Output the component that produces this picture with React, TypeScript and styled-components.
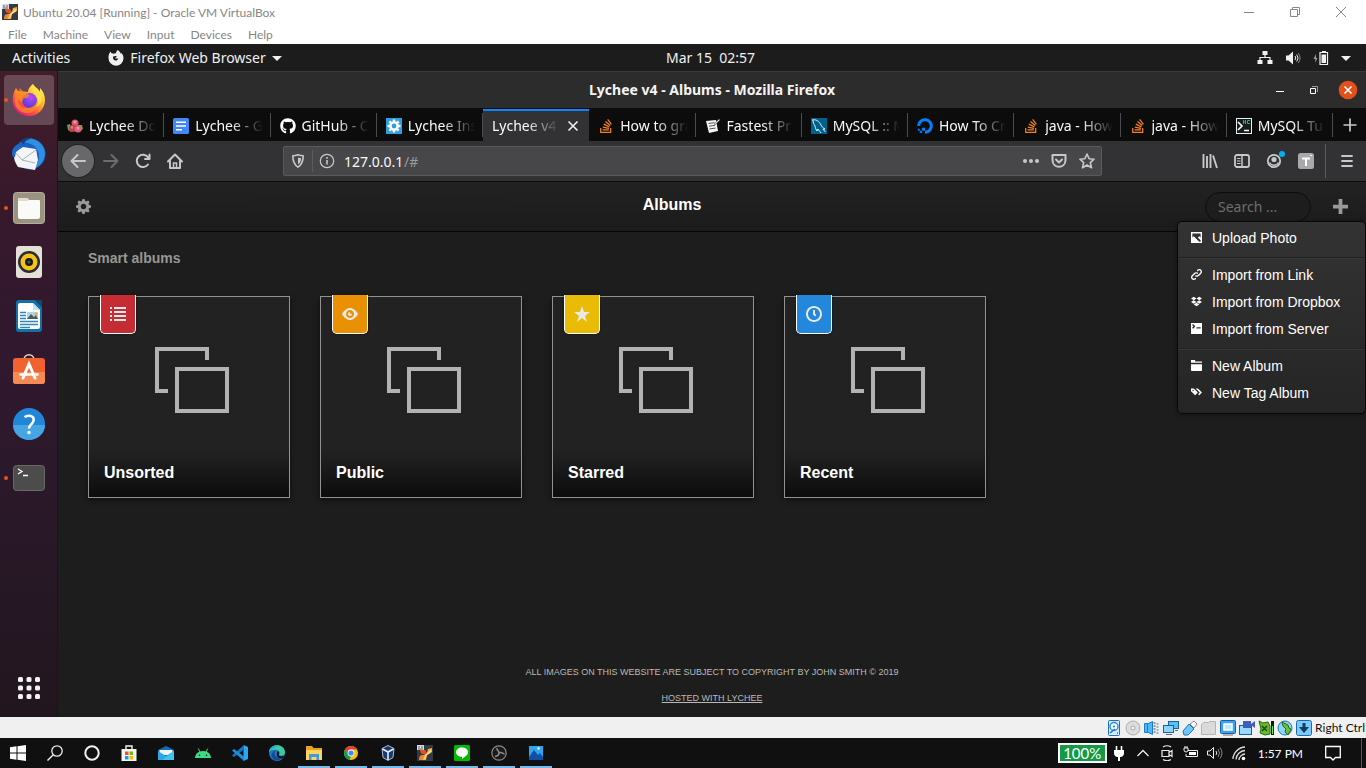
import React from "react";
import styled, { createGlobalStyle, css } from "styled-components";
import { FaDigitalOcean, FaDropbox, FaGithub, FaStackOverflow } from "react-icons/fa";

const ubuntu = `"Noto Sans", "Open Sans", sans-serif`;
const segoe = `Lato, "Open Sans", sans-serif`;
const helvetica = `"Liberation Sans", Arial, sans-serif`;

const GlobalStyle = createGlobalStyle`
  *, *::before, *::after { box-sizing: border-box; }
  body { margin: 0; background: #1d1d1d; font-family: ${ubuntu}; }
  button { margin: 0; padding: 0; border: 0; background: none; color: inherit; font: inherit; white-space: nowrap; }
  svg { display: block; flex: none; }
  h1, h2, p, ul { margin: 0; padding: 0; list-style: none; }
`;

const center = css`
  display: flex;
  align-items: center;
  justify-content: center;
`;

const Desktop = styled.div`
  display: flex;
  flex-direction: column;
  min-height: 100vh;
`;

/* Host window chrome */
const HostTitle = styled.div`
  display: flex;
  align-items: center;
  height: 24px;
  padding: 0 2px;
  gap: 5px;
  background: #fff;
  color: #868686;
  font: 12px ${segoe};
`;
const HostControls = styled.div`
  display: flex;
  margin-left: auto;
  button { ${center} width: 46px; height: 22px; }
`;
const HostMenu = styled.nav`
  display: flex;
  gap: 16px;
  height: 20px;
  padding: 0 8px;
  background: #fff;
  color: #868686;
  font: 12px ${segoe};
`;

/* Guest desktop */
const TopBar = styled.header`
  display: grid;
  grid-template-columns: 1fr auto 1fr;
  align-items: center;
  height: 27px;
  padding: 0 15px 0 12px;
  background: #1c1c1c;
  color: #f0f0f0;
  font-size: 14px;
`;
const TopClock = styled.time`
  padding-left: 58px;
`;
const TopGroup = styled.div<{ $end?: boolean }>`
  display: flex;
  align-items: center;
  gap: ${(p) => (p.$end ? 12 : 38)}px;
  justify-content: ${(p) => (p.$end ? "flex-end" : "flex-start")};
  button { display: flex; align-items: center; gap: 6px; }
`;
const Guest = styled.div`
  display: flex;
  flex: 1;
`;
const Dock = styled.aside`
  display: flex;
  flex-direction: column;
  align-items: center;
  width: 58px;
  padding: 4px 0;
  gap: 4px;
  border-right: 1px solid #181418;
  background: linear-gradient(#421d2a 0%, #38192b 18%, #30182f 45%, #281827 75%, #22161e 100%);
`;
const DockButton = styled.button<{ $running?: boolean; $active?: boolean; $last?: boolean }>`
  ${center}
  position: relative;
  width: 50px;
  height: 50px;
  border-radius: 4px;
  background: ${(p) => (p.$active ? "rgba(255,255,255,0.2)" : "none")};
  margin-top: ${(p) => (p.$last ? "auto" : "0")};
  &::before {
    content: "";
    display: ${(p) => (p.$running ? "block" : "none")};
    position: absolute;
    left: 0;
    top: 23px;
    width: 4px;
    height: 4px;
    border-radius: 50%;
    background: #e95420;
  }
`;

/* Firefox */
const Browser = styled.main`
  display: flex;
  flex-direction: column;
  flex: 1;
  min-width: 0;
  border-top: 1px solid #3a3a3a;
  background: #1d1d1d;
`;
const WindowBar = styled.div`
  display: grid;
  grid-template-columns: 1fr auto 1fr;
  align-items: center;
  height: 36px;
  padding-bottom: 1px;
  background: #2c2c2c;
  color: #f4f4f4;
  font-size: 14px;
  font-weight: 700;
`;
const WindowControls = styled.div`
  grid-column: 3;
  display: flex;
  justify-content: flex-end;
  gap: 14px;
  padding-right: 8px;
  button { ${center} width: 20px; height: 20px; }
`;
const TabStrip = styled.div`
  display: flex;
  height: 33px;
  padding-top: 1px;
  background: #0c0c0d;
  color: #f9f9fa;
  font-size: 14px;
`;
const Tab = styled.button<{ $active?: boolean }>`
  display: flex;
  flex: 1 1 0;
  min-width: 0;
  align-items: center;
  gap: 6px;
  position: relative;
  padding: 0 8px 1px 9px;
  background: ${(p) => (p.$active ? "#323234" : "none")};
  border-top: 2px solid ${(p) => (p.$active ? "#0a84ff" : "transparent")};
  &::after {
    content: "";
    display: ${(p) => (p.$active ? "none" : "block")};
    position: absolute;
    right: 0;
    top: 2px;
    width: 1px;
    height: 24px;
    background: #4c4c4e;
  }
`;
const TabLabel = styled.span`
  flex: 1;
  min-width: 0;
  overflow: hidden;
  text-align: left;
  white-space: nowrap;
  mask-image: linear-gradient(to left, transparent, #000 32px);
`;
const NewTab = styled.button`
  ${center}
  width: 33px;
`;
const NavBar = styled.div`
  display: flex;
  align-items: center;
  height: 41px;
  padding: 0 3px 0 4px;
  border-bottom: 1px solid #0c0c0d;
  background: #323234;
  color: #c8c8c9;
`;
const NavButton = styled.button<{ $back?: boolean; $dim?: boolean }>`
  ${center}
  width: 32px;
  height: 32px;
  margin-right: ${(p) => (p.$back ? 1 : 0)}px;
  border-radius: 50%;
  background: ${(p) => (p.$back ? "#68686a" : "none")};
  box-shadow: ${(p) => (p.$back ? "0 0 0 1px #222" : "none")};
  color: ${(p) => (p.$dim ? "#6d6d6f" : "inherit")};
`;
const UrlBar = styled.div`
  display: flex;
  flex: 1;
  align-items: center;
  gap: 6px;
  height: 30px;
  margin: 0 92px;
  padding: 0 6px;
  border: 1px solid #5a5a5c;
  border-radius: 2px;
  background: #474749;
  font-size: 14px;
`;
const UrlText = styled.label`
  display: flex;
  flex: 1;
  color: #9a9a9c;
  padding-left: 3px;
  input {
    width: 60px;
    padding: 0;
    border: 0;
    background: none;
    color: #f9f9fa;
    font: inherit;
    field-sizing: content;
  }
`;
const UrlActions = styled.div`
  display: flex;
  gap: 12px;
`;
const Divider = styled.i<{ $h: number }>`
  width: 1px;
  height: ${(p) => p.$h}px;
  background: #5b5b60;
`;
const MenuDivider = styled(Divider)`
  margin: 0 5px 0 3px;
`;

/* Lychee */
const Header = styled.header`
  position: relative;
  display: flex;
  align-items: center;
  height: 50px;
  border-bottom: 1px solid #060606;
  background: linear-gradient(#222, #1b1b1b);
  color: #9a9a9a;
`;
const Settings = styled.button`
  width: 81px;
  padding-left: 18px;
`;
const PageTitle = styled.h1`
  flex: 1;
  padding-bottom: 4px;
  color: #fff;
  font: 700 16px/20px ${helvetica};
  text-align: center;
`;
const Search = styled.input`
  width: 106px;
  height: 30px;
  padding: 0 12px;
  border: 1px solid #0c0c0c;
  border-radius: 15px;
  background: #1d1d1d;
  color: #fff;
  font: 14px ${ubuntu};
  &::placeholder { color: #6e6e6e; opacity: 1; }
`;
const AddButton = styled.button`
  padding: 0 18px 0 22px;
`;
const Menu = styled.div`
  position: absolute;
  right: 0;
  top: 39px;
  z-index: 2;
  width: 189px;
  padding: 2px 0 7px;
  border: 1px solid #080808;
  border-radius: 5px;
  background: linear-gradient(#333, #252525);
  box-shadow: 0 1px 4px rgba(0, 0, 0, 0.4);
  color: #fff;
  hr { margin: 6px 0 3px; height: 1px; border: 0; background: #222; box-shadow: 0 1px 0 #373737; }
`;
const MenuItem = styled.button`
  display: flex;
  align-items: center;
  gap: 10px;
  width: 100%;
  height: 27px;
  padding: 0 13px;
  font: 14px ${helvetica};
`;
const Content = styled.section`
  flex: 1;
  padding: 17px 30px;
`;
const SectionTitle = styled.h2`
  color: #979797;
  font: 700 14px/18px ${helvetica};
`;
const Albums = styled.div`
  display: flex;
  flex-wrap: wrap;
  gap: 30px;
  margin-top: 29px;
`;
const Album = styled.button`
  display: flex;
  flex-direction: column;
  align-items: center;
  position: relative;
  width: 202px;
  height: 202px;
  padding-top: 50px;
  border: 1px solid #929292;
  background: #222;
  box-shadow: 0 2px 5px rgba(0, 0, 0, 0.5);
`;
const AlbumArt = styled.svg`
  margin-left: 6px;
  fill: none;
  stroke: #b3b3b3;
  stroke-width: 4;
`;
const Badge = styled.span<{ $color: string }>`
  ${center}
  position: absolute;
  left: 11px;
  top: -2px;
  width: 36px;
  height: 39px;
  border: 1px solid #fff;
  border-top: 0;
  border-radius: 0 0 5px 5px;
  background: ${(p) => p.$color};
  box-shadow: 0 0 2px rgba(0, 0, 0, 0.6);
  color: #e9e9e9;
`;
const AlbumTitle = styled.span`
  width: 100%;
  margin-top: auto;
  padding: 12px 15px 14px;
  background: linear-gradient(rgba(0, 0, 0, 0), rgba(0, 0, 0, 0.65));
  color: #fff;
  font: 700 16px/20px ${helvetica};
  text-align: left;
`;
const Footer = styled.footer`
  display: flex;
  flex-direction: column;
  align-items: center;
  gap: 14px;
  padding-bottom: 13px;
  color: #bababa;
  font: 9px/12px ${helvetica};
  text-transform: uppercase;
  a { color: inherit; }
`;

/* Host bottom bars */
const StatusBar = styled.div`
  display: flex;
  align-items: center;
  justify-content: flex-end;
  gap: 3px;
  height: 21px;
  padding-right: 1px;
  background: #f0f0f0;
  color: #111;
  font: 12px ${segoe};
`;
const Taskbar = styled.footer`
  display: flex;
  height: 30px;
  background: #101010;
  color: #fff;
`;
const TaskButton = styled.button<{ $open?: boolean }>`
  ${center}
  width: 37px;
  padding: 2px 2px 0 0;
  border-bottom: 2px solid ${(p) => (p.$open ? "#76b9ed" : "transparent")};
  border-image: ${(p) => (p.$open ? "linear-gradient(90deg, transparent 4px, #76b9ed 4px, #76b9ed 32px, transparent 32px) 2" : "none")};
`;
const Tray = styled.div`
  display: flex;
  align-items: center;
  gap: 4px;
  margin-left: auto;
  font: 12px ${segoe};
`;
const TrayIcons = styled.div`
  display: flex;
  gap: 8px;
`;
const Charge = styled.span`
  ${center}
  width: 49px;
  height: 20px;
  border: 2px solid #fff;
  background: #159947;
  font: 15px ${segoe};
`;
const Clock = styled.time`
  padding: 0 18px 0 7px;
`;
const ShowDesktop = styled.button`
  width: 5px;
  height: 30px;
  margin-left: 16px;
  border-left: 1px solid #555;
`;

/* Icons */
type IconProps = { size: number; children: React.ReactNode; box?: string };
const Icon = ({ size, children, box = "0 0 16 16" }: IconProps) => (
  <svg width={size} height={size} viewBox={box} fill="none" aria-hidden="true">{children}</svg>
);
const Glyph = ({ d, size, y = 0 }: { d: string; size: number; y?: number }) => (
  <svg width={size} height={size} viewBox={`0 ${-y} 8 8`} fill="currentColor" fillRule="evenodd" aria-hidden="true"><path d={d} /></svg>
);

const glyphs = {
  image: "M0 0v8h8v-8h-8zm1 1h6v3l-1-1-1 1 2 2v1h-1l-4-4-1 1v-3z",
  link: "M5.88.03c-.18.01-.36.03-.53.09-.27.1-.53.25-.75.47a.5.5 0 1 0 .69.69c.11-.11.24-.17.38-.22.35-.12.78-.07 1.06.22.39.39.39 1.04 0 1.44l-1.5 1.5c-.44.44-.8.48-1.06.47-.26-.01-.41-.13-.41-.13a.5.5 0 1 0-.5.88s.34.22.84.25c.5.03 1.2-.16 1.81-.78l1.5-1.5c.78-.78.78-2.04 0-2.81-.28-.28-.61-.45-.97-.53-.18-.04-.38-.04-.56-.03zm-2 2.31c-.5-.02-1.19.15-1.78.75l-1.5 1.5c-.78.78-.78 2.04 0 2.81.56.56 1.36.72 2.06.47.27-.1.53-.25.75-.47a.5.5 0 1 0-.69-.69c-.11.11-.24.17-.38.22-.35.12-.78.07-1.06-.22-.39-.39-.39-1.04 0-1.44l1.5-1.5c.4-.4.75-.45 1.03-.44.28.01.47.09.47.09a.5.5 0 1 0 .44-.88s-.34-.2-.84-.22z",
  terminal: "M0 0v8h8v-8h-8zm1.5.78l1.72 1.72-1.72 1.72-.72-.72 1-1-1-1 .72-.72zm2.5 2.22h3v1h-3v-1z",
  folder: "M0 0v2h8v-1h-5v-1h-3zm0 3v4.5c0 .28.22.5.5.5h7c.28 0 .5-.22.5-.5v-4.5h-8z",
  tags: "M0 0v2l3 3 1.5-1.5.5-.5-2-2-1-1h-2zm3.41 0l3 3-1.19 1.22.78.78 2-2-3-3h-1.59zm-1.91 1c.28 0 .5.22.5.5s-.22.5-.5.5-.5-.22-.5-.5.22-.5.5-.5z",
  cog: "M3.5 0l-.5 1.19c-.1.03-.19.08-.28.13l-1.19-.5-.72.72.5 1.19c-.05.1-.09.18-.13.28l-1.19.5v1l1.19.5c.04.1.08.18.13.28l-.5 1.19.72.72 1.19-.5c.09.04.18.09.28.13l.5 1.19h1l.5-1.19c.09-.04.19-.08.28-.13l1.19.5.72-.72-.5-1.19c.04-.09.09-.19.13-.28l1.19-.5v-1l-1.19-.5c-.03-.09-.08-.19-.13-.28l.5-1.19-.72-.72-1.19.5c-.09-.04-.19-.09-.28-.13l-.5-1.19h-1zm.5 2.5c.83 0 1.5.67 1.5 1.5s-.67 1.5-1.5 1.5-1.5-.67-1.5-1.5.67-1.5 1.5-1.5z",
  plus: "M3 0v3h-3v2h3v3h2v-3h3v-2h-3v-3z",
  list: "M0 0v1h1v-1h-1zm2 0v1h6v-1h-6zm-2 2v1h1v-1h-1zm2 0v1h6v-1h-6zm-2 2v1h1v-1h-1zm2 0v1h6v-1h-6zm-2 2v1h1v-1h-1zm2 0v1h6v-1h-6z",
  eye: "M4.03 0c-2.53 0-4.03 3-4.03 3s1.5 3 4.03 3c2.47 0 3.97-3 3.97-3s-1.5-3-3.97-3zm-.03 1c1.11 0 2 .9 2 2 0 1.11-.89 2-2 2-1.1 0-2-.89-2-2 0-1.1.9-2 2-2zm0 1c-.55 0-1 .45-1 1s.45 1 1 1 1-.45 1-1c0-.1-.04-.19-.06-.28-.08.16-.24.28-.44.28-.28 0-.5-.22-.5-.5 0-.2.12-.36.28-.44-.09-.03-.18-.06-.28-.06z",
  star: "M4 0l-1 3h-3l2.5 2-1 3 2.5-2 2.5 2-1-3 2.5-2h-3l-1-3z",
  clock: "M4 0c-2.2 0-4 1.8-4 4s1.8 4 4 4 4-1.8 4-4-1.8-4-4-4zm0 1c1.66 0 3 1.34 3 3s-1.34 3-3 3-3-1.34-3-3 1.34-3 3-3zm-.5 1v2.22l.16.13.5.5.34.38.72-.72-.38-.34-.34-.34v-1.81h-1z",
};

const Caret = () => <Icon size={10} box="0 0 10 10"><path d="M0 3h10L5 8z" fill="#f0f0f0" /></Icon>;

const machineArt = (
  <>
    <path d="M0 0h16v16H0z" fill="#343a45" />
    <path d="M2 15l1-4 4-1 3-2 1-4 4-1v4l-3 2-2 1-1 5z" fill="#f9b233" />
    <path d="M3 5h5l2 3-2 1.500-4-1z" fill="#e8501c" />
    <path d="M2 15l1-4 3-1 1 2-2 3z" fill="#f08030" />
    <path d="M9 9l5-4v2l-4 3-2 4H7z" fill="#fde0ac" />
    <path d="M0 0h7v5H0z" fill="#d8dce0" />
    <path d="M1 2h2M4 2h2M1 4h5" stroke="#666" />
  </>
);

const FirefoxMono = () => (
  <Icon size={16}>
    <path d="M10 0C8.500 1 8 2 8.200 3.200 7 3 6 3.200 5.400 3.800L3.200 3 2.600 1.500C1 3.200.4 5.600.5 8a7.500 7.500 0 0 0 15 .4C15.600 5.600 14.500 4 13 2.800l.3 1.800C12.800 2.500 11 1.500 10 0zM5.200 6.500l2.300-.4c.8-.2 1.200.2 1.200.8-.9.2-1.600.8-1.400 1.500 1 .6 2-.3 3 .1-.5 1.600-2 2.300-3.300 1.900C5.400 10 4.600 8.200 5.200 6.500z" fill="#f0f0f0" fillRule="evenodd" />
  </Icon>
);

const FirefoxLogo = () => (
  <Icon size={34} box="0 0 34 34">
    <defs>
      <linearGradient id="ffBody" x1="0.85" y1="0.1" x2="0.2" y2="0.95">
        <stop offset="0" stopColor="#fff44f" /><stop offset=".4" stopColor="#ffab2a" /><stop offset=".7" stopColor="#ff4f45" /><stop offset="1" stopColor="#e31587" />
      </linearGradient>
      <radialGradient id="ffCore" cx=".6" cy=".3" r=".8"><stop offset="0" stopColor="#b44bff" /><stop offset="1" stopColor="#4f36c9" /></radialGradient>
    </defs>
    <path d="M21 1c-3 2-5 5-5 8L6 8 4 5C1 10 0 15 1 20c1.500 8 8 13 16 13 9 0 16-7 16-16 0-5-2-9-5-12v4c-2-4-6-5-7-8z" fill="url(#ffBody)" />
    <circle cx="17.500" cy="17.500" r="7.500" fill="url(#ffCore)" />
    <path d="M4 6c1 1 2 2 3 2l4 .500C9 6 8 5 7 6l1 2c3 0 6 1 9 4 1 1-1 3-3 3s-4 1-3 3c-2 1-4 0-5-2 0 6 4 9 9 9 7 0 11-5 10-11 4 9-2 16-10 16C8 30 1 24 3 14z" fill="#ff8a20" opacity=".75" />
    <path d="M21 1c-2 3-2 6 1 9 4 4 5 9 2 14 7-3 7-11 4-15-2-4-6-5-7-8z" fill="#ffe147" />
  </Icon>
);

const Thunderbird = () => (
  <Icon size={36} box="0 0 36 36">
    <circle cx="19" cy="18" r="15.500" fill="#1b5fc0" />
    <path d="M9 7C12 2 18 1 22 3c7 2 12 8 12 15-1 8-6 13-12 15 6-6 8-13 4-20C22 7 15 6 9 7z" fill="#2f8fe0" />
    <path d="M9 6c3-4 8-5 12-3-4 0-7 2-8 5z" fill="#173f85" />
    <path d="M4 16l8-5 13 2 2 11-3 10-17-3C3 25 2 20 4 16z" fill="#f4f5f7" />
    <path d="M5 17l6 7 14-10M11 24l13 3" stroke="#aab2bd" />
    <path d="M1 17c0-4 2-7 6-9l4 3-6 5-1 5C2 22 1 20 1 17z" fill="#1d68cb" />
  </Icon>
);

const dockItems = [
  { name: "Firefox", running: true, active: true, icon: <FirefoxLogo /> },
  { name: "Thunderbird", icon: <Thunderbird /> },
  {
    name: "Files", running: true,
    icon: (
      <Icon size={32} box="0 0 32 32">
        <rect x=".500" y=".500" width="31" height="31" rx="3" fill="#9a9382" stroke="#b5ae9d" />
        <path d="M5 7q0-1 1-1h8l2 2h10q1 0 1 1v16q0 2-2 2H7q-2 0-2-2z" fill="#fafaf8" />
        <path d="M5 7q0-1 1-1h8l2 2-2 1H5z" fill="#dedbd2" />
      </Icon>
    ),
  },
  {
    name: "Rhythmbox",
    icon: (
      <Icon size={32} box="0 0 32 32">
        <rect x="3" width="26" height="32" rx="3" fill="#e4e0d8" />
        <circle cx="16" cy="16" r="11" fill="#2a2c30" /><circle cx="16" cy="16" r="8.500" fill="#f3c318" />
        <circle cx="16" cy="16" r="4" fill="#17191c" /><circle cx="16" cy="16" r="1.500" fill="#555" />
      </Icon>
    ),
  },
  {
    name: "LibreOffice Writer",
    icon: (
      <Icon size={32} box="0 0 32 32">
        <path d="M6 0h16l7 7v22q0 3-3 3H6q-3 0-3-3V3q0-3 3-3z" fill="#1272a8" />
        <path d="M7 3h13l7 7v17q0 2-2 2H7q-2 0-2-2V5q0-2 2-2z" fill="#fff" />
        <path d="M22 0h7v7z" fill="#0c4a70" /><path d="M20 3v7h7z" fill="#bfe2f4" />
        <path d="M7 12.500h6M7 15.500h6M7 18.500h6M7 21.500h18M7 24.500h18M7 27.500h10" stroke="#2e86b7" strokeWidth="1.500" />
        <path d="M14 12h11v7H14z" fill="#a6d8ef" /><path d="M14 19l4-5 3 3 2-2 2 4z" fill="#4c5b63" /><circle cx="23" cy="14" r="1.500" fill="#f6b21a" />
      </Icon>
    ),
  },
  {
    name: "Software",
    icon: (
      <Icon size={32} box="0 0 32 32">
        <path d="M11 6c0-7 10-7 10 0" stroke="#f5d9b0" strokeWidth="1.500" />
        <rect y="4" width="32" height="26" rx="3" fill="#f0622f" /><path d="M0 18h32v9q0 3-3 3H3q-3 0-3-3z" fill="#f68a53" />
        <path d="M10 24l6-14 6 14" stroke="#fff" strokeWidth="3" strokeLinecap="round" />
        <path d="M7.500 20.500h17" stroke="#fff" strokeWidth="2.500" strokeLinecap="round" />
      </Icon>
    ),
  },
  {
    name: "Help",
    icon: (
      <Icon size={32} box="0 0 32 32">
        <circle cx="16" cy="16" r="16" fill="#2086d8" /><path d="M0 17a16 15 0 0 0 32 0z" fill="#47a5e5" />
        <path d="M11.500 9c6-3 11 0 8.500 5C18.500 17 16 17 16 20.500" stroke="#fff" strokeWidth="2.500" /><circle cx="16" cy="24.500" r="1.800" fill="#fff" />
      </Icon>
    ),
  },
  {
    name: "Terminal", running: true,
    icon: (
      <Icon size={32} box="0 0 32 32">
        <rect x=".500" y="3.500" width="31" height="25" rx="3" fill="#4c4c4c" stroke="#686868" />
        <path d="M5 7l4 2.500L5 12M10 13.500h5" stroke="#fff" strokeWidth="1.300" />
      </Icon>
    ),
  },
];

const StackIcon = () => <FaStackOverflow size={16} color="#f48024" />;

const tabs: { label: string; icon?: React.ReactNode }[] = [
  {
    label: "Lychee Do",
    icon: (
      <Icon size={16}>
        <path d="M0 7l3-1 2 5-1 3-3-2zM11 7h4l1 4-4 3z" fill="#6fa044" />
        <circle cx="8" cy="5" r="3.500" fill="#d8526a" /><circle cx="5.500" cy="10.500" r="3.500" fill="#c53d58" /><circle cx="11" cy="11" r="3.500" fill="#de6078" />
        <circle cx="8" cy="4" r="1.500" fill="#f19aa7" /><circle cx="11" cy="10" r="1.500" fill="#f19aa7" /><circle cx="5" cy="9.500" r="1.200" fill="#e8808f" />
      </Icon>
    ),
  },
  {
    label: "Lychee - G",
    icon: <Icon size={16}><rect width="16" height="16" rx="1.500" fill="#4285f4" /><path d="M3 4.200h10M3 8h10M3 11.800h6" stroke="#fff" strokeWidth="1.600" /></Icon>,
  },
  { label: "GitHub - C", icon: <FaGithub size={16} color="#fff" /> },
  {
    label: "Lychee Ins",
    icon: (
      <Icon size={16}>
        <rect width="16" height="16" fill="#2c9fe0" />
        <g stroke="#fff" strokeWidth="2.500"><path d="M8 1.500v13M1.500 8h13M3.400 3.400l9.200 9.200M12.600 3.400l-9.200 9.200" /></g>
        <circle cx="8" cy="8" r="3.600" fill="#2c9fe0" stroke="#fff" strokeWidth="2.400" />
      </Icon>
    ),
  },
  { label: "Lychee v4" },
  { label: "How to gra", icon: <StackIcon /> },
  {
    label: "Fastest Pr",
    icon: (
      <Icon size={16}>
        <path d="M1 3l10-1 2 11-9 2z" fill="#f4f4f4" /><path d="M3.500 5.500l6-.800M4 8.200l6-.800M4.500 10.900l6-.800" stroke="#555" />
        <path d="M9 6l5-5 1 1-5 5z" fill="#ddd" stroke="#444" strokeWidth=".500" />
      </Icon>
    ),
  },
  {
    label: "MySQL :: M",
    icon: (
      <Icon size={16}>
        <rect width="16" height="16" fill="#00618a" />
        <path d="M1 2c4-1 7 1 9 5 1 2 2 3 4 4l-2 .300 2.500 2.700M2 2c0 3 1 4 2 6 .500 2 1 4 2 5l1-2c1 2 2 2 3 4" stroke="#fff" strokeWidth=".900" />
      </Icon>
    ),
  },
  { label: "How To Cr", icon: <FaDigitalOcean size={16} color="#0080ff" /> },
  { label: "java - How", icon: <StackIcon /> },
  { label: "java - How", icon: <StackIcon /> },
  {
    label: "MySQL Tu",
    icon: (
      <Icon size={16}>
        <rect x=".500" y=".500" width="15" height="15" fill="#151c20" stroke="#eee" />
        <path d="M2 4l4 4-4 4M8 12.500h5" stroke="#fff" strokeWidth="1.600" />
        <path d="M7.500 2v4M9.500 2v4M7.500 4h2M14 2.500h-2.500v3H14" stroke="#2bb24c" />
      </Icon>
    ),
  },
];

const s = { stroke: "currentColor", strokeWidth: 2, strokeLinecap: "round" as const, strokeLinejoin: "round" as const };

const albums = [
  { title: "Unsorted", color: "#c62c33", d: glyphs.list, y: 0.5 },
  { title: "Public", color: "#e99004", d: glyphs.eye, y: 1 },
  { title: "Starred", color: "#e9bb06", d: glyphs.star, y: 0 },
  { title: "Recent", color: "#2387dc", d: glyphs.clock, y: 0 },
];

const statusIcons = [
  { name: "Hard disks", art: <><rect x="2.500" y=".500" width="11" height="15" rx="1" fill="#d4ecff" stroke="#1b6fc4" /><circle cx="8" cy="6.500" r="4" fill="#fff" stroke="#2b8ee0" strokeWidth="1.500" /><circle cx="8" cy="6.500" r="1" fill="#1b6fc4" /><path d="M4 13l5-4M11 13h1" stroke="#1b6fc4" strokeWidth="1.500" /></> },
  { name: "Optical drives", art: <><circle cx="8" cy="8" r="7" fill="#dcdcdc" stroke="#b0b0b0" /><circle cx="8" cy="8" r="2" fill="#f4f4f4" stroke="#aaa" /></> },
  { name: "Audio", art: <><path d="M.500 3.500h3v9h-3zM3.500 4l5-2.500v13l-5-2.500z" fill="#4fb8f5" stroke="#1e78c8" /><path d="M10.500 2v12" stroke="#8a9aa8" strokeWidth="2" strokeDasharray="2 1" /><path d="M13.500 3v11" stroke="#9fb0bd" strokeWidth="2" strokeDasharray="2 1" /></> },
  { name: "Network", art: <><rect x="5.500" y="1.500" width="10" height="7" fill="#5cc0f8" stroke="#1860a8" /><rect x=".500" y="5.500" width="10" height="7" fill="#8bd6ff" stroke="#1860a8" /><path d="M3 14.500h6M12 10.500h3" stroke="#666" /></> },
  { name: "USB", art: <><path d="M1 11l6-7 5 5-6 6H2z" fill="#6ec6fa" stroke="#1a72c2" /><path d="M8 4l4-3 3 3-3 4z" fill="#fff" stroke="#889" /></> },
  { name: "Shared folders", art: <path d="M.500 4.500l2-2h5l1-1h6v13H.500z" fill="#dadada" stroke="#b5b5b5" /> },
  { name: "Display", art: <><rect x=".500" y=".500" width="15" height="13" rx="1" fill="#3da3ee" stroke="#1560a8" /><path d="M4 4h8v6H4z" fill="#bfe7ff" stroke="#fff" strokeWidth="1.500" /><path d="M3 15h10" stroke="#777" /></> },
  { name: "Recording", art: <><rect x=".500" y="5.500" width="12" height="9" fill="#9ad9ff" stroke="#1560a8" /><path d="M4 1h8v7H4zM12 4l4-3v7l-4-3z" fill="#3f5fc0" /></> },
  { name: "Features", art: <><path d="M1 1l4 2 5-1 2 4v8l-5 1-5-2 1-4z" fill="#67b82c" stroke="#286a10" /><path d="M4 6l5 5M9 6l-5 5" stroke="#174d08" strokeWidth="1.500" /><path d="M13 1h3v14h-3z" fill="#111" /><path d="M14 6h1v8h-1z" fill="#4f4" /></> },
  { name: "Mouse", art: <><circle cx="8" cy="8" r="7" fill="#8dd5fb" stroke="#1c78c0" /><path d="M5 2l6 3 1 3 2 1-3 6-3-3 1-3-3-3z" fill="#6cc03a" stroke="#276b14" /></> },
  { name: "Keyboard", art: <><rect x=".500" y=".500" width="15" height="15" rx="2" fill="#7acbf8" stroke="#1a6ab0" /><path d="M6.500 3h3v4H13l-5 6-5-6h3.500z" fill="#123c66" /></> },
];

const tasks = [
  { name: "Start", art: <path d="M0 2.200l6.500-.900v6.200H0zM7.500 1.200L16 0v7.500H7.500zM0 8.500h6.500v6.200L0 13.800zM7.500 8.500H16V16l-8.500-1.200z" fill="#fff" /> },
  { name: "Search", art: <><circle cx="10" cy="6" r="5.200" stroke="#eee" strokeWidth="1.300" /><path d="M6.300 9.700L.500 15.500" stroke="#eee" strokeWidth="1.400" /></> },
  { name: "Cortana", art: <circle cx="8" cy="8" r="6.700" stroke="#f0f0f0" strokeWidth="2" /> },
  { name: "Microsoft Store", art: <><path d="M5 4V1h6v3" stroke="#f4f4f4" strokeWidth="1.400" /><path d="M.500 4h15v12H.500z" fill="#f4f4f4" /><path d="M4 6.500h3.500V10H4z" fill="#f25022" /><path d="M8.500 6.500H12V10H8.500z" fill="#7fba00" /><path d="M4 11h3.500v3.500H4z" fill="#00a4ef" /><path d="M8.500 11H12v3.500H8.500z" fill="#ffb900" /></> },
  { name: "Mail", art: <><path d="M0 5l8-4 8 4v10H0z" fill="#0f6cbd" /><path d="M1.500 5h13v5h-13z" fill="#f4f4f4" /><path d="M0 6l8 5 8-5v9H0z" fill="#28a8ea" /><path d="M16 6v9H4z" fill="#3fc4f6" /></> },
  { name: "Android Studio", art: <><path d="M0 13c.300-4 3-7 8-7s7.700 3 8 7z" fill="#3ddc84" /><path d="M3.200 3.500L5 7M12.800 3.500L11 7" stroke="#3ddc84" /><circle cx="4.500" cy="10.200" r=".800" fill="#101010" /><circle cx="11.500" cy="10.200" r=".800" fill="#101010" /></> },
  { name: "Visual Studio Code", art: <><path d="M11.500 0L16 2v12l-4.500 2z" fill="#2aa8f2" /><path d="M12 0v4.500L2 12 0 10.500z" fill="#0f78c0" /><path d="M12 16v-4.500L2 4 0 5.500z" fill="#1b8fdc" /></> },
  { name: "Edge", art: <><circle cx="8" cy="8" r="8" fill="#1b74c8" /><path d="M0 7c1-9 15-9 16 0 .300 3-3 4.500-6 3 1-1 1-4-2-5-3-.500-6 0-8 2z" fill="#3ccb9b" /><path d="M0 7c1-5 5-7 9-6.500C5 2 3 4 0 7z" fill="#28a6da" /><path d="M6.500 5.500C4 8 6 13 12 13.500c-2 2.500-6 2.500-8 0-2.500-3-1-7 2.500-8z" fill="#124a94" /><path d="M9 6c2 1.500 1 3 .500 4 1 1.500 4 1.800 6 .500l-2 3C9 14 6 10 9 6z" fill="#101010" /></> },
  { name: "File Explorer", open: true, art: <><path d="M0 1h6l1.500 2H16v12H0z" fill="#e8a317" /><path d="M0 5h16v10H0z" fill="#fcd462" /><path d="M3 15V9h10v6h-2.500v-3h-5v3z" fill="#3f9be0" /></> },
  { name: "Chrome", open: true, art: <><circle cx="8" cy="8" r="7" fill="#f4c20d" /><path d="M2 4.500a7 7 0 0 1 12.200 0H8L5 9.500z" fill="#db4437" /><path d="M2 4.500l3 5 3 2-1.500 3.400A7 7 0 0 1 2 4.500z" fill="#0f9d58" /><circle cx="8" cy="8" r="3.400" fill="#fff" /><circle cx="8" cy="8" r="2.600" fill="#4285f4" /></> },
  { name: "VirtualBox", open: true, art: <><path d="M8 .500l6 3-1 9L8 15.500l-5-3-1-9z" fill="#183a6b" stroke="#a9bede" /><path d="M2.500 4L8 7l5.500-3M8 7v8" stroke="#e7eef8" strokeWidth="1.600" /></> },
  { name: "Virtual machine", open: true, art: machineArt },
  { name: "LINE", open: true, art: <><rect width="16" height="16" rx="1.500" fill="#00b900" /><path d="M8 2.500c3.500 0 6 2 6 4.800S11 11.500 8 14v-2.200C4.500 11.800 2 10 2 7.300s2.500-4.800 6-4.800z" fill="#fff" /></> },
  { name: "OBS Studio", open: true, art: <><circle cx="8" cy="8" r="7.200" fill="#1a1a1a" stroke="#8a8a8a" strokeWidth="1.200" /><path d="M8 8c0-3-3-3-2-5M8 8c2.600-1.500 4.200 1 5.500 1M8 8c0 3-2 3-4 3.500" stroke="#8a8a8a" strokeWidth="1.500" /></> },
  { name: "Photos", open: true, art: <><path d="M1 1h14v14H1z" fill="#2fa4ef" /><path d="M1 12l5-7 4 5 2-2 3 4v3H1z" fill="#0f4fa8" /><circle cx="10.500" cy="3.500" r="1.200" fill="#fff" /></> },
];

export default function App() {
  return (
    <Desktop>
      <GlobalStyle />
      <HostTitle>
        <Icon size={16}>{machineArt}</Icon>
        Ubuntu 20.04 [Running] - Oracle VM VirtualBox
        <HostControls>
          <button aria-label="Minimize"><Icon size={10} box="0 0 10 10"><path d="M0 5.500h10" stroke="#888" /></Icon></button>
          <button aria-label="Restore"><Icon size={10} box="0 0 10 10"><path d="M.500 2.500h7v7h-7zM2.500 2.500v-2h7v7h-2" stroke="#888" /></Icon></button>
          <button aria-label="Close"><Icon size={10} box="0 0 10 10"><path d="M0 0l10 10M10 0L0 10" stroke="#888" /></Icon></button>
        </HostControls>
      </HostTitle>
      <HostMenu>
        {["File", "Machine", "View", "Input", "Devices", "Help"].map((m) => <button key={m}>{m}</button>)}
      </HostMenu>

      <TopBar>
        <TopGroup>
          <button>Activities</button>
          <button><FirefoxMono />Firefox Web Browser<Caret /></button>
        </TopGroup>
        <TopClock>Mar 15&nbsp; 02:57</TopClock>
        <TopGroup $end>
          <Icon size={16}><path d="M5.500 1h5v4h-5zM.500 10h5v4h-5zM10.500 10h5v4h-5z" fill="#f0f0f0" /><path d="M8 5v3M3 10V7.500h10V10" stroke="#f0f0f0" strokeWidth="1.200" /></Icon>
          <Icon size={16}><path d="M1 5.500h2.500L8 1.500v13l-4.500-4H1z" fill="#f0f0f0" /><path d="M10 6q1.500 2 0 4M11.700 4.500q2.800 3.500 0 7" stroke="#f0f0f0" /><path d="M13.300 3q3.500 5 0 10" stroke="#888" /></Icon>
          <Icon size={16}><path d="M3 4L.500 9H2.500L2 13l2.500-5H3z" fill="#9a9a9a" /><path d="M8 2.500h6.500v12H7v-12h1M9 1.500h4" stroke="#f0f0f0" strokeWidth="1.200" /><path d="M8.500 4.500h4.500V13H8.500z" fill="#f0f0f0" /></Icon>
          <Caret />
        </TopGroup>
      </TopBar>

      <Guest>
        <Dock>
          {dockItems.map((d) => (
            <DockButton key={d.name} aria-label={d.name} $running={d.running} $active={d.active}>{d.icon}</DockButton>
          ))}
          <DockButton aria-label="Show applications" $last>
            <Icon size={22} box="0 0 22 22">
              {[0, 1, 2].flatMap((r) => [0, 1, 2].map((c) => <rect key={`${r}${c}`} x={c * 8.5} y={r * 8.5} width="5" height="5" rx="1.500" fill="#f2f2f2" />))}
            </Icon>
          </DockButton>
        </Dock>

        <Browser>
          <WindowBar>
            <i />
            <span>Lychee v4 - Albums - Mozilla Firefox</span>
            <WindowControls>
              <button aria-label="Minimize"><Icon size={16}><path d="M4 9.500h8" stroke="#fff" /></Icon></button>
              <button aria-label="Restore"><Icon size={16}><path d="M4.500 6.500h5v5h-5z" stroke="#fff" /><path d="M6 4.500h5.500V10" stroke="#999" /></Icon></button>
              <button aria-label="Close"><Icon size={20} box="0 0 20 20"><circle cx="10" cy="10" r="9.300" fill="#e2501c" /><path d="M6.500 6.500l7 7M13.500 6.500l-7 7" stroke="#fff" strokeWidth="1.600" /></Icon></button>
            </WindowControls>
          </WindowBar>

          <TabStrip>
            {tabs.map((t, i) => (
              <Tab key={i} $active={!t.icon}>
                {t.icon}
                <TabLabel>{t.label}</TabLabel>
                {!t.icon && <Icon size={16}><path d="M3.500 3.500l9 9M12.500 3.500l-9 9" stroke="#f0f0f0" strokeWidth="1.600" /></Icon>}
              </Tab>
            ))}
            <NewTab aria-label="New tab"><Icon size={16}><path d="M8 1.500v13M1.500 8h13" stroke="#c8c8c9" strokeWidth="1.700" /></Icon></NewTab>
          </TabStrip>

          <NavBar>
            <NavButton $back aria-label="Back"><Icon size={16}><path {...s} d="M1.500 8H15M7.500 2l-6 6 6 6" /></Icon></NavButton>
            <NavButton $dim aria-label="Forward"><Icon size={16}><path {...s} d="M14.500 8H1M8.500 2l6 6-6 6" /></Icon></NavButton>
            <NavButton aria-label="Reload"><Icon size={16}><path {...s} d="M13 11.500A6.200 6.200 0 1 1 13 4.200M14.500 1.500V6H10" /></Icon></NavButton>
            <NavButton aria-label="Home"><Icon size={16}><path {...s} d="M1 8.500l7-7 7 7M3 8v7h10V8" /><path d="M6.500 15v-5h3v5" stroke="currentColor" strokeWidth="1.500" /></Icon></NavButton>
            <UrlBar>
              <Icon size={16}><path d="M8 1.800c2 .700 3.500 1 5.200 1 0 5-.700 8.500-5.200 11.400C3.500 11.300 2.800 7.800 2.800 2.800 4.500 2.800 6 2.500 8 1.800z" stroke="currentColor" strokeWidth="1.600" strokeLinejoin="round" /><path d="M8 4.500c1 .400 2 .500 3 .600 0 2.700-.500 4.800-3 6.500z" fill="currentColor" /></Icon>
              <Divider $h={22} />
              <Icon size={16}><circle cx="8" cy="8" r="6.700" stroke="currentColor" strokeWidth="1.200" /><path d="M8 7v4.500M8 4v1.700" stroke="currentColor" strokeWidth="1.600" /></Icon>
              <UrlText><input aria-label="Address" defaultValue="127.0.0.1" />/#</UrlText>
              <UrlActions>
                <button aria-label="Page actions"><Icon size={16}><g fill="currentColor"><circle cx="2" cy="8" r="2" /><circle cx="8" cy="8" r="2" /><circle cx="14" cy="8" r="2" /></g></Icon></button>
                <button aria-label="Save to Pocket"><Icon size={16}><path {...s} d="M1.500 2h13v5c0 9-13 9-13 0z" /><path {...s} d="M5 6.500l3 3 3-3" /></Icon></button>
                <button aria-label="Bookmark"><Icon size={16}><path {...s} strokeWidth={1.600} d="M8 1l2.100 4.700 5 .500-3.800 3.400 1.200 5.200L8 12l-4.500 2.800 1.200-5.200L.900 6.200l5-.500z" /></Icon></button>
              </UrlActions>
            </UrlBar>
            <NavButton aria-label="Library"><Icon size={16}><path d="M1.500 1v14M5 3v12M8.500 1v14M11 2.500L15 15" stroke="currentColor" strokeWidth="1.900" /></Icon></NavButton>
            <NavButton aria-label="Sidebars"><Icon size={16}><rect x="1" y="2" width="14" height="12" rx="2" stroke="currentColor" strokeWidth="1.800" /><path d="M8 2v12" stroke="currentColor" strokeWidth="1.500" /><path d="M3 5.500h3.500M3 8h3.500M3 10.500h3.500" stroke="currentColor" /></Icon></NavButton>
            <NavButton aria-label="Account">
              <Icon size={24} box="-4 -4 24 24"><circle cx="8" cy="8" r="6.200" stroke="currentColor" strokeWidth="1.800" /><circle cx="8" cy="6.500" r="2.600" fill="currentColor" /><path d="M3.500 9.500c1.500 3.500 7.500 3.500 9 0" stroke="currentColor" strokeWidth="1.500" /><circle cx="16" cy="1" r="3" fill="#00b3f4" /></Icon>
            </NavButton>
            <NavButton aria-label="Extension"><Icon size={16}><rect width="16" height="16" rx="2.500" fill="#a9a9aa" /><path d="M4 5.500h8M8 5.500V13" stroke="#fff" strokeWidth="2" /><path d="M12 2.500h2" stroke="#eee" /></Icon></NavButton>
            <MenuDivider $h={34} />
            <NavButton aria-label="Open menu"><Icon size={16}><path {...s} strokeWidth={1.800} d="M3 3h10M3 8h10M3 13h10" /></Icon></NavButton>
          </NavBar>

          <Header>
            <Settings aria-label="Settings"><Glyph d={glyphs.cog} size={15} /></Settings>
            <PageTitle>Albums</PageTitle>
            <Search type="text" aria-label="Search" placeholder="Search ..." />
            <AddButton aria-label="Add"><Glyph d={glyphs.plus} size={15} /></AddButton>
            <Menu>
              <MenuItem><Glyph d={glyphs.image} size={11} />Upload Photo</MenuItem>
              <hr />
              <MenuItem><Glyph d={glyphs.link} size={11} />Import from Link</MenuItem>
              <MenuItem><FaDropbox size={11} />Import from Dropbox</MenuItem>
              <MenuItem><Glyph d={glyphs.terminal} size={11} />Import from Server</MenuItem>
              <hr />
              <MenuItem><Glyph d={glyphs.folder} size={11} />New Album</MenuItem>
              <MenuItem><Glyph d={glyphs.tags} size={11} y={1} />New Tag Album</MenuItem>
            </Menu>
          </Header>

          <Content>
            <SectionTitle>Smart albums</SectionTitle>
            <Albums>
              {albums.map((a) => (
                <Album key={a.title}>
                  <Badge $color={a.color}><Glyph d={a.d} size={16} y={a.y} /></Badge>
                  <AlbumArt width="74" height="66" viewBox="0 0 74 66" aria-hidden="true">
                    <path d="M52 13V2H2v42h11" />
                    <path d="M22 22h50v42H22z" />
                  </AlbumArt>
                  <AlbumTitle>{a.title}</AlbumTitle>
                </Album>
              ))}
            </Albums>
          </Content>

          <Footer>
            <p>All images on this website are subject to copyright by John Smith © 2019</p>
            <a href="#lychee">Hosted with Lychee</a>
          </Footer>
        </Browser>
      </Guest>

      <StatusBar>
        {statusIcons.map((i) => <Icon key={i.name} size={16}>{i.art}</Icon>)}
        Right Ctrl
      </StatusBar>

      <Taskbar>
        {tasks.map((t) => (
          <TaskButton key={t.name} aria-label={t.name} $open={t.open}><Icon size={16}>{t.art}</Icon></TaskButton>
        ))}
        <Tray>
          <Charge>100%</Charge>
          <TrayIcons>
            <Icon size={16}><path d="M5.500 1v4M10.500 1v4" stroke="#fff" strokeWidth="1.600" /><path d="M3 5h10v3q0 3-3 4H9v4H7v-4H6q-3-1-3-4z" fill="#fff" /></Icon>
            <Icon size={16}><path d="M2.500 11L8 5.500l5.500 5.500" stroke="#eee" strokeWidth="1.300" /></Icon>
            <Icon size={16}><path d="M3 5.500h7v6H3zM10 7.500l3-2v6l-3-2M4 2q4-2.500 8 0M4 14.500q4 2.500 8 0" stroke="#eee" strokeWidth="1.200" /></Icon>
            <Icon size={16}><path d="M5 5.500h9.500v6H3V9M1 3h4v2q0 2-2 2T1 5zM2 1v2M4 1v2" stroke="#eee" /><path d="M6 7h7v3H6z" fill="#fff" /></Icon>
            <Icon size={16}><path d="M.500 6h2.500l3.500-3.500v11L3 10H.500z" stroke="#eee" /><path d="M9 6q1.500 2 0 4" stroke="#eee" /><path d="M11 4q3 4 0 8M13 2.500q4 5.500 0 11" stroke="#888" /></Icon>
            <Icon size={16}><path d="M2 14C2 8 8 2 14 2M5 14.500c0-4.500 4.500-9 9-9M8 15c0-3 3-6 6-6" stroke="#ddd" strokeWidth="1.300" /><circle cx="12.500" cy="13.500" r="1.800" fill="#fff" /></Icon>
          </TrayIcons>
          <Clock>1:57 PM</Clock>
          <Icon size={16}><path d="M.700 1.500h14.600v11H10.500L8 15l-2.500-2.500H.700z" stroke="#fff" strokeWidth="1.300" /></Icon>
          <ShowDesktop aria-label="Show desktop" />
        </Tray>
      </Taskbar>
    </Desktop>
  );
}
